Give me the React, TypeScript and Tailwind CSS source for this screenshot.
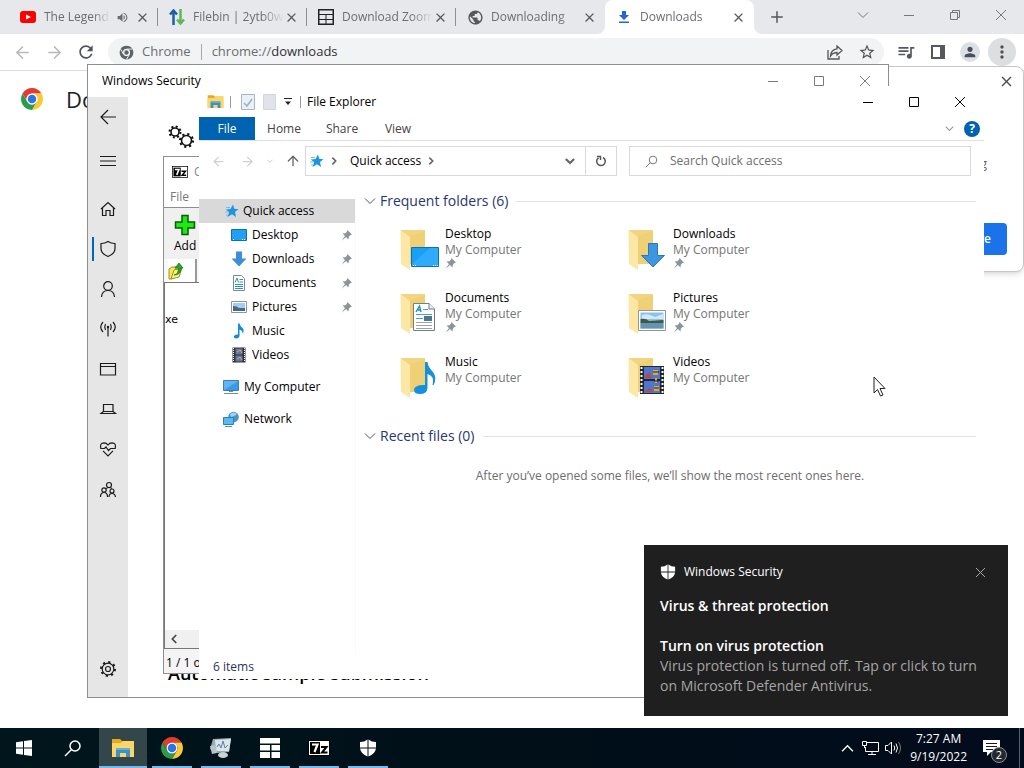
import React from "react";
import clsx from "clsx";
import {
  MdClose,
  MdMoreVert,
  MdPerson,
  MdPublic,
  MdQueueMusic,
  MdRefresh,
  MdStarBorder,
  MdVolumeUp,
} from "react-icons/md";
import { ArrowLeft, ArrowRight, ArrowUp, ChevronLeft, Plus } from "lucide-react";

/* ---------- shared icons ---------- */

const ChromeLogo: React.FC<{ size: number; mono?: boolean }> = ({ size, mono }) => (
  <svg width={size} height={size} viewBox="0 0 48 48">
    <path d="M24 13H43.05A22 22 0 0 0 4.95 13L14.47 29.5A11 11 0 0 1 24 13Z" fill={mono ? "#5f6368" : "#e33b2e"} />
    <path d="M43.05 13H24A11 11 0 0 1 33.53 29.5L24 46A22 22 0 0 0 43.05 13Z" fill={mono ? "#5f6368" : "#fcc934"} />
    <path d="M4.95 13L14.47 29.5A11 11 0 0 0 33.53 29.5L24 46A22 22 0 0 1 4.95 13Z" fill={mono ? "#5f6368" : "#2a9d48"} />
    {mono && <path d="M24 13H43M33.53 29.5L24 46M14.47 29.5L5 13" stroke="#f1f3f4" strokeWidth="3" />}
    <circle cx="24" cy="24" r="11" fill={mono ? "#f1f3f4" : "#fff"} />
    <circle cx="24" cy="24" r={mono ? 7 : 8.5} fill={mono ? "#5f6368" : "#2f74e6"} />
  </svg>
);

const ExplorerIcon: React.FC<{ size: number }> = ({ size }) => (
  <svg width={size} height={size} viewBox="0 0 24 24">
    <path d="M1 3H9L11 5H23V21H1Z" fill="#e8a820" />
    <path d="M1 7H10L12 5H23V21H1Z" fill="#fcd765" />
    <path d="M5 21V13Q5 12 6 12H18Q19 12 19 13V21H15V17H9V21Z" fill="#3e8fc8" />
    <path d="M5 14V12H19V14Z" fill="#5fb0de" />
  </svg>
);

const SevenZipIcon: React.FC<{ size: number }> = ({ size }) => (
  <svg width={size} height={size} viewBox="0 0 22 22">
    <rect x="0.5" y="3.5" width="21" height="15" fill="#fff" stroke="#000" />
    <rect x="2" y="5" width="10" height="12" fill="#000" />
    <path d="M4 7.5H9.5L6.5 15" fill="none" stroke="#fff" strokeWidth="2.2" />
    <path d="M13 10H18.5L14 15.5H19.5" fill="none" stroke="#000" strokeWidth="2" />
  </svg>
);

const DefenderShield: React.FC<{ size: number }> = ({ size }) => (
  <svg width={size} height={size} viewBox="0 0 18 18" fill="#fff">
    <path d="M8.5 0.5Q5.5 3 1 3V8.5H8.5Z" />
    <path d="M9.5 0.5Q12.5 3 17 3V8.5H9.5Z" />
    <path d="M1 9.5H8.5V17.5Q2 15 1 9.5Z" />
    <path d="M17 9.5H9.5V17.5Q16 15 17 9.5Z" />
  </svg>
);

const GridAppIcon: React.FC<{ outlined?: boolean }> = ({ outlined }) =>
  outlined ? (
    <svg width="16" height="16" viewBox="0 0 16 16" fill="none" stroke="#222" className="shrink-0">
      <rect x="0.75" y="0.75" width="14.5" height="14.5" strokeWidth="1.5" />
      <path d="M1 5.5H15M1 10.5H15M8 5.5V15" />
    </svg>
  ) : (
    <svg width="20" height="20" viewBox="0 0 20 20" fill="#fff">
      <path d="M0 0H20V5.500H0ZM0 7H10V12.500H0ZM11.500 7H20V12.500H11.500ZM0 14H10V20H0ZM11.500 14H20V20H11.500Z" />
    </svg>
  );

const QuickStar: React.FC = () => (
  <svg width="14" height="14" viewBox="0 0 14 14" className="shrink-0">
    <path d="M8 0.5L9.2 4.8L13.5 5.2L10 8L11 13L7 10.2L2.5 13L4.2 8.2L0.8 5.5L5.5 5Z" fill="#1d94e2" />
    <path d="M1 3.5H5M0 8H3.5M1 11H3" stroke="#6dbef2" />
  </svg>
);

const PinIcon: React.FC = () => (
  <svg width="11" height="11" viewBox="0 0 11 11" fill="#8d9499">
    <path d="M6.5 0L11 4.5L9.5 5L7.8 6.7L7.5 9.5L5 7L0.5 10.7L4 6L1.5 3.5L4.5 3.2L6 1.5Z" />
  </svg>
);

const Chevron: React.FC<{ size: number; weight?: number; className?: string }> = ({ size, weight = 1, className }) => (
  <svg width={size} height={size} viewBox="0 0 12 12" fill="none" stroke="currentColor" strokeWidth={weight} className={clsx("shrink-0", className)}>
    <path d="M1 3.5L6 8.5L11 3.5" />
  </svg>
);

/* ---------- window controls ---------- */

const WindowControls: React.FC<{ color: string; restored?: boolean }> = ({ color, restored }) => (
  <div className={clsx("flex", color)}>
    <button aria-label="Minimize" className="flex h-[30px] w-[46px] items-center justify-center">
      <svg width="10" height="10" stroke="currentColor"><path d="M0 5.5H10" /></svg>
    </button>
    <button aria-label="Maximize" className="flex h-[30px] w-[46px] items-center justify-center">
      <svg width="10" height="10" stroke="currentColor" fill="none">
        {restored ? <path d="M0.5 2.5H7.5V9.5H0.5ZM2.5 2.5V0.5H9.5V7.5H7.5" /> : <path d="M0.5 0.5H9.5V9.5H0.5Z" />}
      </svg>
    </button>
    <button aria-label="Close" className="flex h-[30px] w-[46px] items-center justify-center">
      <svg width="12" height="12" stroke="currentColor"><path d="M1 1L11 11M11 1L1 11" /></svg>
    </button>
  </div>
);

/* ---------- Chrome ---------- */

interface TabProps {
  title: string;
  icon: React.ReactNode;
  audio?: boolean;
  active?: boolean;
  separator?: boolean;
}

const BrowserTab: React.FC<TabProps> = ({ title, icon, audio, active, separator }) => (
  <div
    className={clsx(
      "relative flex h-full w-[149px] items-center pl-[11px] pr-2 text-[#6a6d72]",
      active && "rounded-t-lg bg-white"
    )}
  >
    <span className="mr-2 flex w-4 shrink-0 items-center justify-center">{icon}</span>
    <span className="flex-1 overflow-hidden whitespace-nowrap text-xs [mask-image:linear-gradient(to_right,#000_75%,transparent)]">
      {title}
    </span>
    {audio && <MdVolumeUp size={13} className="mx-1.5 shrink-0" />}
    <button aria-label={`Close ${title}`} className="shrink-0 text-[#55585c]">
      <MdClose size={15} />
    </button>
    {separator && <span className="absolute right-0 top-2 h-[18px] w-px bg-[#8c8f94]" />}
    {active && (
      <>
        <svg width="8" height="8" className="absolute -left-2 bottom-0"><path d="M8 0V8H0A8 8 0 0 0 8 0" fill="#fff" /></svg>
        <svg width="8" height="8" className="absolute -right-2 bottom-0"><path d="M0 0V8H8A8 8 0 0 1 0 0" fill="#fff" /></svg>
      </>
    )}
  </div>
);

const Browser: React.FC = () => (
  <div className="flex flex-1 flex-col bg-white">
    <div className="flex h-[34px] bg-[#e7e8eb] pl-[9px]">
      <BrowserTab
        title="The Legend"
        audio
        separator
        icon={
          <svg width="16" height="12" viewBox="0 0 16 12">
            <rect width="16" height="12" rx="3" fill="#f00" />
            <path d="M6 3.5L11 6L6 8.5Z" fill="#fff" />
          </svg>
        }
      />
      <BrowserTab
        title="Filebin | 2ytb0w"
        separator
        icon={
          <svg width="16" height="16" viewBox="0 0 16 16" fill="none" strokeWidth="2.5">
            <path d="M4.5 16V2M1 5.5L4.5 1.5L8 5.5" stroke="#1c5eaa" />
            <path d="M11.5 0V14M8 10.5L11.5 14.5L15 10.5" stroke="#62b655" />
          </svg>
        }
      />
      <BrowserTab title="Download Zoom" separator icon={<GridAppIcon outlined />} />
      <BrowserTab title="Downloading" icon={<MdPublic size={17} className="shrink-0 text-[#55585c]" />} />
      <BrowserTab
        title="Downloads"
        active
        icon={
          <svg width="14" height="14" viewBox="0 0 14 14" fill="#2468d8">
            <path d="M5 1H9V5H12L7 10L2 5H5ZM2 11.5H12V13H2Z" />
          </svg>
        }
      />
      <button aria-label="New tab" className="ml-3.5 text-[#54575b]">
        <Plus size={18} />
      </button>
      <div className="ml-auto flex items-start text-[#777]">
        <button aria-label="Search tabs" className="flex h-[30px] w-[46px] items-center justify-center">
          <Chevron size={12} />
        </button>
        <WindowControls color="text-[#777]" restored />
      </div>
    </div>
    <div className="flex h-[37px] items-center border-b border-[#dadce0] px-1.5">
      <button aria-label="Back" className="flex w-8 justify-center text-[#b6b8bb]"><ArrowLeft size={19} /></button>
      <button aria-label="Forward" className="flex w-8 justify-center text-[#b6b8bb]"><ArrowRight size={19} /></button>
      <button aria-label="Reload" className="flex w-8 justify-center text-[#505357]"><MdRefresh size={20} /></button>
      <div className="ml-1.5 mr-1.5 flex h-7 flex-1 items-center rounded-full bg-[#f1f3f4] pl-[11px] pr-px text-[13px]">
        <ChromeLogo size={15} mono />
        <span className="ml-2 text-[#6a6d72]">Chrome</span>
        <span className="mx-2.5 h-4 w-px bg-[#a5a8ac]" />
        <span className="flex-1 text-[#6a6d72]">
          chrome://<span className="text-[#303236]">downloads</span>
        </span>
        <button aria-label="Share" className="flex w-8 justify-center">
          <svg width="16" height="15" viewBox="0 0 16 15" fill="none" stroke="#55585c" strokeWidth="1.3">
            <path d="M1 5V14H12V11" />
            <path d="M10 1L15 5.5L10 10V7.5Q6 7.500 3.5 11Q4 4.5 10 3.8Z" />
          </svg>
        </button>
        <button aria-label="Bookmark" className="flex w-8 justify-center text-[#505357]"><MdStarBorder size={18} /></button>
      </div>
      <button aria-label="Media" className="flex w-8 justify-center text-[#55585c]"><MdQueueMusic size={20} /></button>
      <button aria-label="Side panel" className="flex w-8 justify-center">
        <svg width="14" height="14" viewBox="0 0 14 14">
          <path d="M1 1H13V13H1Z" fill="none" stroke="#55585c" strokeWidth="2" />
          <path d="M9 1H13V13H9Z" fill="#55585c" />
        </svg>
      </button>
      <button aria-label="Profile" className="mx-1.5 flex size-5 items-center justify-center rounded-full bg-[#dcdfe6] text-[#4a4e57]">
        <MdPerson size={16} />
      </button>
      <button aria-label="Menu" className="mx-0.5 flex size-7 items-center justify-center rounded-full bg-[#dddee0] text-[#505357]">
        <MdMoreVert size={20} />
      </button>
    </div>
    <div className="flex items-center gap-[22px] px-5 py-3">
      <ChromeLogo size={24} />
      <h1 className="text-[22px] leading-8 text-[#202124]">Downloads</h1>
    </div>
  </div>
);

const RestoreBubble: React.FC = () => (
  <div className="absolute right-0 top-[66px] flex h-[206px] w-[320px] flex-col items-end rounded-lg border border-[#c4c6c9] bg-white px-4 pb-4 shadow-md">
    <button aria-label="Dismiss" className="mt-1.5 -mr-2 text-[#4b4e52]">
      <MdClose size={17} />
    </button>
    <p className="mt-[66px] pr-5 text-xs text-[#5f6368]">g</p>
    <button className="mt-auto h-8 rounded bg-[#1a73e8] px-4 text-xs font-semibold text-white">Restore</button>
  </div>
);

/* ---------- Windows Security ---------- */

const securityNav: { name: string; art: React.ReactNode }[] = [
  { name: "Home", art: <path d="M1 8L8 1.5L15 8M2.5 7V14.5H6V9.5H10V14.5H13.5V7" /> },
  { name: "Virus protection", art: <path d="M8 0.5Q11 2.5 15 2.5V7.5Q15 12.5 8 15.5Q1 12.5 1 7.5V2.5Q5 2.5 8 0.5Z" /> },
  {
    name: "Account",
    art: (
      <>
        <circle cx="8" cy="5" r="4.3" />
        <path d="M1.5 16Q2 9.5 8 9.5T14.5 16" />
      </>
    ),
  },
  {
    name: "Firewall",
    art: (
      <>
        <path d="M8 6V15.5M5.5 9Q4 6 5.5 3M10.5 9Q12 6 10.5 3M3 11Q-1.5 6 3 1M13 11Q17.5 6 13 1" />
        <circle cx="8" cy="6" r="0.6" />
      </>
    ),
  },
  { name: "App control", art: <path d="M0.5 2.5H15.5V14H0.5ZM0.5 5.5H15.5" /> },
  { name: "Device security", art: <path d="M3.5 3.5H13V10.5H3.5ZM3.5 10.5L1 12.5H15.5L13 10.5" /> },
  {
    name: "Device health",
    art: (
      <path d="M0.8 7.5Q-0.5 2 4 1.8Q6.5 1.800 8 4Q9.5 1.8 12 1.8Q16.500 2 15.2 7.5M0.5 7.500H4.500L6 6L8.500 9.500L10.500 7.500H15.500M3 9.800L8 14.800L13 9.800" />
    ),
  },
  {
    name: "Family",
    art: (
      <>
        <circle cx="9" cy="4" r="2.5" />
        <circle cx="4" cy="9" r="2.2" />
        <circle cx="12" cy="10" r="2" />
        <path d="M0.5 16Q0.5 11.500 4 11.500T7.500 16M9 16Q9 12.500 12 12.500T15.500 16M6 7.500Q9 5.500 12 7.500" />
      </>
    ),
  },
];

const LineIcon: React.FC<{ children: React.ReactNode }> = ({ children }) => (
  <svg width="16" height="16" viewBox="0 0 16 16" fill="none" stroke="#1c1c1c" strokeWidth="1.2" overflow="visible">
    {children}
  </svg>
);

const SecurityWindow: React.FC = () => (
  <section className="absolute bottom-[30px] left-[87px] right-[135px] top-16 flex flex-col border border-[#8e8e8e] bg-white">
    <header className="flex h-8 items-center justify-between pl-3.5 text-xs">
      <span>Windows Security</span>
      <WindowControls color="text-[#7a7a7a]" />
    </header>
    <div className="flex flex-1">
      <nav className="flex w-10 flex-col bg-[#e6e6e6] pb-2">
        <button aria-label="Back" className="flex h-10 items-center justify-center">
          <LineIcon><path d="M16 8H1M8 1L1 8L8 15" /></LineIcon>
        </button>
        <button aria-label="Menu" className="mb-2 mt-1 flex h-10 items-center justify-center">
          <LineIcon><path d="M0 3.5H16M0 8H16M0 12.5H16" /></LineIcon>
        </button>
        {securityNav.map((item, index) => (
          <button key={item.name} aria-label={item.name} className="relative flex h-10 items-center justify-center">
            {index === 1 && <span className="absolute left-1 top-2 h-6 w-0.5 bg-[#0067b8]" />}
            <LineIcon>{item.art}</LineIcon>
          </button>
        ))}
        <button aria-label="Settings" className="mt-auto flex h-10 items-center justify-center">
          <LineIcon>
            <circle cx="8" cy="8" r="2.5" />
            <circle cx="8" cy="8" r="5.8" />
            <circle cx="8" cy="8" r="7" strokeWidth="2" strokeDasharray="2.2 3.3" />
          </LineIcon>
        </button>
      </nav>
      <div className="flex flex-1 flex-col justify-between pb-2.5 pl-10 pt-7">
        <svg width="26" height="24" viewBox="0 0 26 24" fill="none" stroke="#111">
          <circle cx="7" cy="7" r="4" strokeWidth="1.6" />
          <circle cx="7" cy="7" r="5.5" strokeWidth="2" strokeDasharray="2 2.32" />
          <circle cx="18.5" cy="15.5" r="5" strokeWidth="1.6" />
          <circle cx="18.5" cy="15.5" r="6.5" strokeWidth="2" strokeDasharray="2.2 2.9" />
        </svg>
        <h2 className="text-lg font-semibold leading-7">Automatic sample submission</h2>
      </div>
    </div>
  </section>
);

/* ---------- 7-Zip ---------- */

const SevenZipWindow: React.FC = () => (
  <section className="absolute bottom-[54px] left-[163px] top-[156px] flex w-[300px] flex-col border border-[#8e8e8e] bg-white text-xs">
    <header className="flex h-[30px] items-center gap-1.5 pl-2 text-[#888]">
      <SevenZipIcon size={16} />
      <span>C</span>
    </header>
    <div className="flex h-5 items-center pl-1.5 text-[#777]">File</div>
    <button className="flex h-[52px] w-full flex-col items-start border-t border-[#8e8e8e] bg-[#f0f0f0] pl-2.5 pt-1.5">
      <svg width="22" height="22" viewBox="0 0 22 22">
        <path d="M8 1.5H14V8H20.5V14H14V20.5H8V14H1.5V8H8Z" fill="#1eea0e" stroke="#0a5a08" strokeWidth="1.5" />
      </svg>
      <span className="leading-5">Add</span>
    </button>
    <div className="flex h-6 items-center border-b border-[#777] bg-[#f8f8f8] pl-1">
      <div className="flex h-full w-[29px] items-center border-r-2 border-[#999] bg-white">
        <svg width="16" height="18" viewBox="0 0 16 18">
          <path d="M1 7L4 5H8V15L3 17H1Z" fill="#f4e95a" stroke="#9c9420" />
          <path d="M3 17L6 8L14 6L11 15Z" fill="#fbf38a" stroke="#9c9420" />
          <path d="M6 13Q11 12 10 6H7L11 1L15 6H13Q13 13 6 13Z" fill="#2aa52a" stroke="#146a14" strokeWidth="0.7" />
        </svg>
      </div>
    </div>
    <div className="flex-1 border-l border-[#777] pt-[30px] font-['DejaVu_Sans',sans-serif] text-[11px]">xe</div>
    <div className="flex h-[19px] items-center border-b border-l border-[#777] bg-[#f0f0f0] pl-0.5">
      <ChevronLeft size={14} strokeWidth={3} className="text-[#444]" />
    </div>
    <footer className="h-6 whitespace-nowrap bg-[#f4f4f4] pl-0.5 pt-1 leading-5">1 / 1 o</footer>
  </section>
);

/* ---------- File Explorer ---------- */

const smallArt: Record<string, React.ReactNode> = {
  Desktop: (
    <>
      <path d="M0.5 2.5H15.5V13.5H0.5Z" fill="#22a0f4" stroke="#0b6fbb" />
      <path d="M2 12.5H4M11 12.5H14" stroke="#fff" strokeDasharray="1 1" />
    </>
  ),
  Downloads: <path d="M5 0.5H11V7.5H15.5L8 15.5L0.5 7.5H5Z" fill="#3c8edb" />,
  Documents: (
    <>
      <path d="M2.5 0.5H10.5L13.5 3.5V15.5H2.5Z" fill="#fff" stroke="#7c8894" />
      <path d="M4 7.5L6 3L7.5 7.5M8.5 4.5H12M8.5 7H12M4 9.5H12M4 11.5H12M4 13.5H12" stroke="#2c93b8" fill="none" />
    </>
  ),
  Pictures: (
    <>
      <path d="M0.5 2.5H15.5V13.5H0.5Z" fill="#fff" stroke="#8c959c" />
      <path d="M2 4H14V12H2Z" fill="#a7cdee" />
      <path d="M2 7Q6 7 8 9H14V12H2Z" fill="#456b86" />
    </>
  ),
  Music: <path d="M7 0.5H8.5Q9 3.5 12 5.5Q13.5 8 11.5 11Q12 7.5 8.5 6.5V13Q8 15.5 5 15.5Q2.5 15 3 13Q4 11 7 11.5Z" fill="#158ad6" />,
  Videos: (
    <>
      <path d="M1.5 0.5H14.5V15.5H1.5Z" fill="#2e3034" />
      <path d="M2.5 1V15M13.5 1V15" stroke="#fff" strokeDasharray="1 1" />
      <path d="M4.5 1.5H11.5V7.5H4.5Z" fill="#6476a8" />
      <path d="M4.5 8.5H11.5V14.5H4.5Z" fill="#6476a8" />
      <path d="M6 5L9 3L11 6M6 12L9 10L11 13" stroke="#d8b04a" fill="none" />
    </>
  ),
  "My Computer": (
    <>
      <path d="M0.5 1.5H15.5V11.5H0.5Z" fill="#5fb4f5" stroke="#3f7fb0" />
      <path d="M1 11L15 2V11Z" fill="#3a9aea" />
      <path d="M1 14.5H15M6 12.5H10" stroke="#7d8b94" />
    </>
  ),
  Network: (
    <>
      <circle cx="10.5" cy="6" r="5.3" fill="#4d94c4" />
      <path d="M7 3Q11 0 14 3Q11 6 8 6Z" fill="#9ed2ee" />
      <path d="M0.5 6.5H10.5V13.5H0.5Z" fill="#58b9f4" stroke="#2f7fae" />
      <path d="M2 15.5H9" stroke="#4d94c4" />
    </>
  ),
};

const SmallIcon: React.FC<{ name: string }> = ({ name }) => (
  <svg width="16" height="16" viewBox="0 0 16 16" className="shrink-0">{smallArt[name]}</svg>
);

/* overlay drawn in front of the folder shape, 40x44 canvas */
const folderArt: Record<string, React.ReactNode> = {
  Desktop: (
    <>
      <path d="M11.5 19.5H38.5V38.5H11.5Z" fill="#18a0f8" stroke="#0c70b8" />
      <path d="M12 36L30 20H38V38H12Z" fill="#2fabfb" />
      <path d="M13 37.5H16M33 37.5H38" stroke="#fff" strokeDasharray="1 1" />
    </>
  ),
  Downloads: <path d="M20.5 15.5H29.5V27.5H36.5L25 39L13.5 27.5H20.5Z" fill="#3c96e0" stroke="#2a78ba" />,
  Documents: (
    <>
      <path d="M13.5 11.5H29L34.5 17V38.5H13.5Z" fill="#fff" stroke="#727d86" />
      <path d="M29 11.5V17H34.5" fill="#e8edf0" stroke="#727d86" />
      <path d="M16 20L19.5 14L21 20M17.5 18H21" stroke="#1c8fc4" strokeWidth="1.4" fill="none" />
      <path d="M23 17.5H28M16 22.5H32M16 26.5H23" stroke="#46a4c8" />
      <path d="M16 30.5H32M16 33.5H32M16 36.5H32" stroke="#9aa3aa" />
      <path d="M24 24H32V29H24Z" fill="#4d7890" />
    </>
  ),
  Pictures: (
    <>
      <path d="M10.5 18.5H37.5V38.5H10.5Z" fill="#fff" stroke="#8f979c" />
      <path d="M12.5 20.5H35.5V36.5H12.5Z" fill="#8ec1ea" />
      <path d="M14 23Q20 21 27 25L35 22V27H14Z" fill="#d5e8f6" />
      <path d="M12.5 27Q18 26 21 29L35.5 28V31H12.5Z" fill="#3c5a48" />
      <path d="M12.5 31H35.5V36.5H12.5Z" fill="#6693b0" />
    </>
  ),
  Music: (
    <path d="M25 6H27.5Q28 11 33 16Q37.5 22 33.5 29H32.5Q35 20 27.5 18V32Q27 38 20 38Q14 38 14 33.5Q15 28.5 25 29Z" fill="#1490dc" />
  ),
  Videos: (
    <>
      <path d="M12 10H36V38H12Z" fill="#23252a" />
      <path d="M13.5 11V38M34.5 11V38" stroke="#fff" strokeWidth="2" strokeDasharray="2 2" />
      <path d="M16 11H32V23H16ZM16 25H32V37H16Z" fill="#4a78d0" />
      <path d="M16 22L21 16L24 22ZM16 36L22 32L25 36Z" fill="#c0453a" />
      <path d="M25 14H30V19H25ZM26 30H31V35H26ZM27 22H29V27H27Z" fill="#eaa52c" />
      <path d="M25 16H31M26 32H31M26 25H31" stroke="#222" />
    </>
  ),
};

const FolderIcon: React.FC<{ name: string }> = ({ name }) => (
  <svg width="40" height="44" viewBox="0 0 40 44" className="mt-0.5 shrink-0">
    <path d="M1 2H25V36H1Z" fill="#f3d581" />
    <path d="M10 8L25 3V36H10Z" fill="#f0d076" />
    <path d="M0.5 2L10 9V42L1 36Z" fill="#fce7a4" />
    {folderArt[name]}
  </svg>
);

const pinned = ["Desktop", "Downloads", "Documents", "Pictures"];
const libraries = [...pinned, "Music", "Videos"];

const SectionHeading: React.FC<{ children: React.ReactNode }> = ({ children }) => (
  <h3 className="flex h-6 items-center gap-1 text-sm text-[#29366f]">
    <Chevron size={12} className="text-[#555]" />
    {children}
    <span className="ml-1 h-px flex-1 bg-[#e2e2e2]" />
  </h3>
);

const ExplorerWindow: React.FC = () => (
  <section className="absolute bottom-[49px] left-[199px] right-10 top-[86px] flex flex-col bg-white text-xs">
    <header className="flex h-[31px] items-center justify-between pl-2 pr-px">
      <div className="flex items-center">
        <ExplorerIcon size={17} />
        <span className="mx-1.5 h-3 w-px bg-[#999]" />
        <svg width="14" height="16" viewBox="0 0 14 16" className="ml-1">
          <path d="M0.5 0.5H13.5V15.5H0.5Z" fill="#eaf0f7" stroke="#a9b5c4" />
          <path d="M3 9L6 12L11 5" fill="none" stroke="#9db1c8" strokeWidth="1.5" />
        </svg>
        <svg width="13" height="16" viewBox="0 0 13 16" className="ml-2">
          <path d="M0.5 0.5H12.5V15.5H0.5Z" fill="#e0e2ec" stroke="#d2d5e0" />
        </svg>
        <svg width="8" height="8" viewBox="0 0 8 8" className="ml-2">
          <path d="M0 0.5H8" stroke="#222" />
          <path d="M1 3.5H7L4 7Z" fill="#222" />
        </svg>
        <span className="ml-2 mr-1.5 h-3 w-px bg-[#999]" />
        <span>File Explorer</span>
      </div>
      <WindowControls color="text-black" />
    </header>

    <div className="flex h-6 items-center border-b border-[#dfdfdf] text-[#444]">
      <button className="h-full w-14 bg-[#0063b1] text-white">File</button>
      <button className="w-[58px]">Home</button>
      <button className="w-[58px]">Share</button>
      <button className="w-[54px]">View</button>
      <button aria-label="Expand ribbon" className="ml-auto text-[#999]"><Chevron size={9} weight={1.5} /></button>
      <button aria-label="Help" className="ml-2.5 mr-1 flex size-4 items-center justify-center rounded-full bg-[#0063b1] font-bold text-white">?</button>
    </div>

    <div className="flex items-center pl-3 pr-[13px] pt-[5px]">
      <button aria-label="Back" className="text-[#d0d0d0]"><ArrowLeft size={15} /></button>
      <button aria-label="Forward" className="ml-3.5 text-[#d0d0d0]"><ArrowRight size={15} /></button>
      <button aria-label="Recent" className="ml-3 text-[#ccc]"><Chevron size={6} weight={2} /></button>
      <button aria-label="Up" className="ml-3 text-[#666]"><ArrowUp size={16} /></button>
      <div className="ml-1 flex h-[30px] flex-1 items-center border border-[#d9d9d9] pl-1">
        <QuickStar />
        <Chevron size={8} weight={2.5} className="mx-1.5 -rotate-90 text-[#666]" />
        <span className="ml-1.5">Quick access</span>
        <Chevron size={8} weight={2.5} className="ml-1.5 -rotate-90 text-[#666]" />
        <button aria-label="Previous locations" className="ml-auto mr-2.5 text-[#666]"><Chevron size={10} weight={2.5} /></button>
      </div>
      <button aria-label="Refresh" className="flex h-[30px] w-[31px] items-center justify-center border border-l-0 border-[#d9d9d9] text-[#555]">
        <svg width="12" height="12" viewBox="0 0 12 12" fill="none" stroke="currentColor" strokeWidth="1.5">
          <path d="M8 2.5A4.3 4.3 0 1 1 3.5 2.8M2 1.5H5.5V5" />
        </svg>
      </button>
      <label className="ml-3 flex h-[30px] w-[342px] items-center border border-[#d9d9d9] pl-[15px]">
        <svg width="13" height="13" viewBox="0 0 13 13" fill="none" stroke="#777" className="shrink-0">
          <circle cx="8" cy="5" r="3.8" />
          <path d="M5.2 7.8L0.8 12.2" />
        </svg>
        <input aria-label="Search Quick access" placeholder="Search Quick access" className="ml-3 w-full outline-none placeholder:text-[#6d6d6d]" />
      </label>
    </div>

    <div className="flex flex-1 pt-[23px]">
      <nav className="w-[156px] shrink-0">
        <a href="#quick" className="flex h-6 items-center gap-1 bg-[#d9d9d9] pl-[26px]">
          <QuickStar />
          Quick access
        </a>
        {libraries.map((name) => (
          <a key={name} href={`#${name}`} className="flex h-6 items-center gap-[5px] pl-8 pr-[3px]">
            <SmallIcon name={name} />
            <span className="flex-1">{name}</span>
            {pinned.includes(name) && <PinIcon />}
          </a>
        ))}
        {["My Computer", "Network"].map((name) => (
          <a key={name} href={`#${name}`} className="mt-2 flex h-6 items-center gap-[5px] pl-6">
            <SmallIcon name={name} />
            {name}
          </a>
        ))}
      </nav>
      <main className="flex-1 border-l border-[#fafafa] pl-2 pr-2">
        <div className="-mt-2.5">
          <SectionHeading>Frequent folders (6)</SectionHeading>
        </div>
        <div className="mt-[13px] grid grid-cols-[228px_228px] pl-9">
          {libraries.map((name) => (
            <div key={name} className="flex h-16 gap-[5px]">
              <FolderIcon name={name} />
              <div className="leading-4">
                <p>{name}</p>
                <p className="text-[#757575]">My Computer</p>
                {pinned.includes(name) && <PinIcon />}
              </div>
            </div>
          ))}
        </div>
        <div className="mt-1.5">
          <SectionHeading>Recent files (0)</SectionHeading>
        </div>
        <p className="mt-5 text-center text-[#6d6d6d]">After you’ve opened some files, we’ll show the most recent ones here.</p>
      </main>
    </div>
    <footer className="h-6 pl-3.5 leading-6 text-[#26345c]">6 items</footer>
  </section>
);

/* ---------- toast + taskbar ---------- */

const Toast: React.FC = () => (
  <aside className="absolute bottom-3 right-4 h-[171px] w-[364px] bg-[#1f1f1f] px-4 pt-4 text-sm leading-5 text-white">
    <div className="flex h-[22px] items-center gap-2 text-xs">
      <DefenderShield size={16} />
      <span className="flex-1">Windows Security</span>
      <button aria-label="Dismiss notification" className="mr-1.5 text-[#aaa]">
        <svg width="11" height="11" stroke="currentColor"><path d="M1 1L10 10M10 1L1 10" /></svg>
      </button>
    </div>
    <p className="mt-[13px] font-semibold">Virus &amp; threat protection</p>
    <p className="mt-5 font-semibold">Turn on virus protection</p>
    <p className="text-[#a5a5a5]">Virus protection is turned off. Tap or click to turn on Microsoft Defender Antivirus.</p>
  </aside>
);

const apps: { name: string; icon: React.ReactNode }[] = [
  { name: "File Explorer", icon: <ExplorerIcon size={24} /> },
  { name: "Google Chrome", icon: <ChromeLogo size={24} /> },
  {
    name: "Process monitor",
    icon: (
      <svg width="24" height="24" viewBox="0 0 24 24">
        <path d="M4 3L22 2L20 16L8 17L1 13Z" fill="#9aa9b2" />
        <path d="M6 4L22 3L20 15L7 15Z" fill="#dce5ea" />
        <path d="M1 10L7 9L8 17L3 18Z" fill="#b8c4cb" />
        <path d="M8 11L10 8L12 12L14 5L16 12L19 9" fill="none" stroke="#5683a0" />
        <ellipse cx="14" cy="19" rx="5" ry="3" fill="#c9d2d7" />
      </svg>
    ),
  },
  { name: "Zoom installer", icon: <GridAppIcon /> },
  { name: "7-Zip", icon: <SevenZipIcon size={22} /> },
  { name: "Windows Security", icon: <DefenderShield size={18} /> },
];

const Taskbar: React.FC = () => (
  <footer className="flex h-10 bg-linear-to-r from-[#00161d] via-[#000f18] to-[#020b1c] text-xs text-white">
    <button aria-label="Start" className="flex w-12 items-center justify-center">
      <svg width="16" height="16" viewBox="0 0 16 16" fill="#fff">
        <path d="M0 2.2L7 1.2V7.5H0ZM8 1L16 0V7.5H8ZM0 8.5H7V14.8L0 13.8ZM8 8.5H16V16L8 15Z" />
      </svg>
    </button>
    <button aria-label="Search" className="flex w-12 items-center justify-center">
      <svg width="17" height="17" viewBox="0 0 17 17" fill="none" stroke="#fff" strokeWidth="1.5">
        <circle cx="11" cy="6" r="5" />
        <path d="M7.5 9.5L1 16" />
      </svg>
    </button>
    <div className="ml-[3px] flex gap-px">
      {apps.map((app, index) => (
        <button
          key={app.name}
          aria-label={app.name}
          className={clsx("relative flex w-12 items-center justify-center", index === 0 && "bg-[#33474b]")}
        >
          {app.icon}
          <span className={clsx("absolute bottom-0 h-0.5 bg-[#76b9ed]", index === 0 ? "inset-x-0" : "inset-x-1")} />
        </button>
      ))}
    </div>
    <div className="ml-auto flex items-center">
      <button aria-label="Show hidden icons"><Chevron size={13} weight={1.2} className="rotate-180" /></button>
      <svg width="17" height="16" viewBox="0 0 17 16" fill="none" stroke="#fff" className="ml-2">
        <path d="M5 2.5H16.5V11.5H3.5V7M10 11.5V14.5M6 14.5H14M0.5 1.5H4.5V5.5H0.5ZM2.5 5.5V8" />
      </svg>
      <svg width="17" height="16" viewBox="0 0 17 16" fill="none" stroke="#fff" className="ml-1.5">
        <path d="M0.5 5.5H3L6.5 2V14L3 10.5H0.5ZM9 5.5Q10.5 8 9 10.5M11 3.5Q14 8 11 12.5" />
        <path d="M13.5 2Q17.5 8 13.5 14" stroke="#777" />
      </svg>
      <div className="ml-2 text-center leading-[18px]">
        <p>7:27 AM</p>
        <p>9/19/2022</p>
      </div>
      <button aria-label="Notifications" className="relative ml-4 mr-[18px] w-[18px]">
        <svg width="18" height="18" viewBox="0 0 18 18">
          <path d="M0 1H17V13H8L4 17V13H0Z" fill="#fff" />
          <path d="M3 4.5H14M3 7.5H14M3 10.5H10" stroke="#101820" />
        </svg>
        <span className="absolute left-2 top-2 flex size-4 items-center justify-center rounded-full border border-[#8a9096] bg-[#24292f] text-[11px]">
          2
        </span>
      </button>
      <span className="mr-1 h-full w-px bg-[#596069]" />
    </div>
  </footer>
);

const App: React.FC = () => (
  <div className="flex min-h-screen flex-col overflow-hidden bg-white font-['Open_Sans',sans-serif] text-black">
    <div className="relative flex flex-1 flex-col">
      <Browser />
      <RestoreBubble />
      <SecurityWindow />
      <SevenZipWindow />
      <ExplorerWindow />
      <Toast />
      <svg width="13" height="21" viewBox="0 0 13 21" className="absolute left-[873px] top-[376px]">
        <path d="M1 1V17L4.5 13.5L7.5 20L10 19L7 12.5H12Z" fill="#fff" stroke="#222" />
      </svg>
    </div>
    <Taskbar />
  </div>
);

export default App;
